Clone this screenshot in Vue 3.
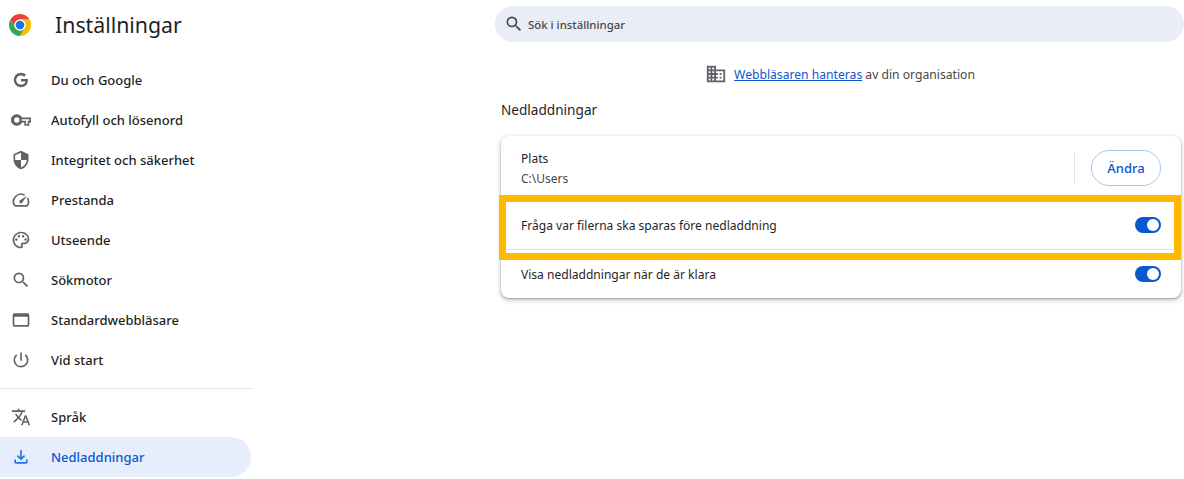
<script setup>
const G = 'M12 10.800v2.900h5.500c-.5 2.300-2.500 3.800-5.500 3.800-3.300 0-5.700-2.500-5.700-5.500S8.700 6.500 12 6.500c1.500 0 2.800.5 3.800 1.500l2.200-2.200C16.500 4.300 14.400 3.400 12 3.400c-4.800 0-8.600 3.800-8.600 8.600s3.800 8.600 8.600 8.600c5 0 8.300-3.500 8.300-8.400 0-.5 0-1-.1-1.400H12z'
const nav1 = [
  { label: 'Du och Google', paths: [G] },
  { label: 'Autofyll och lösenord', paths: ['M22 19h-6v-4h-2.680c-1.140 2.420-3.600 4-6.320 4-3.860 0-7-3.140-7-7s3.140-7 7-7c2.720 0 5.170 1.580 6.320 4H24v6h-2v4zM18 17h2v-4h2v-2H13v2h5zM7 8.800a3.200 3.200 0 1 0 0 6.400a3.200 3.200 0 1 0 0-6.400z'] },
  { label: 'Integritet och säkerhet', paths: ['M12 1L3 5v6c0 5.550 3.840 10.740 9 12 5.160-1.260 9-6.450 9-12V5l-9-4zm0 10.990h7c-.530 4.120-3.280 7.790-7 8.940V12H5V6.300l7-3.110v8.800z'] },
  { label: 'Prestanda', paths: ['M20.380 8.570l-1.230 1.850a8 8 0 0 1-.220 7.580H5.070A8 8 0 0 1 15.580 6.850l1.850-1.230A10 10 0 0 0 3.350 19a2 2 0 0 0 1.720 1h13.850a2 2 0 0 0 1.740-1 10 10 0 0 0-.270-10.440zM10.590 15.410a2 2 0 0 0 2.830 0l5.660-8.490-8.490 5.660a2 2 0 0 0 0 2.830z'] },
  { label: 'Utseende', paths: ['M12 22C6.490 22 2 17.510 2 12S6.490 2 12 2s10 4.040 10 9c0 3.310-2.690 6-6 6h-1.770c-.280 0-.5.220-.5.500 0 .120.050.230.130.330.410.470.640 1.060.640 1.670A2.500 2.500 0 0 1 12 22zm0-18c-4.410 0-8 3.590-8 8s3.590 8 8 8c.280 0 .5-.220.5-.5a.540.540 0 0 0-.140-.350c-.410-.460-.630-1.050-.630-1.650a2.500 2.500 0 0 1 2.500-2.500H16c2.210 0 4-1.790 4-4 0-3.860-3.590-7-8-7z', 'M5 11.500a1.500 1.500 0 1 0 3 0a1.500 1.500 0 1 0-3 0zM8 7.500a1.500 1.500 0 1 0 3 0a1.500 1.500 0 1 0-3 0zM13 7.500a1.500 1.500 0 1 0 3 0a1.500 1.500 0 1 0-3 0zM16 11.500a1.500 1.500 0 1 0 3 0a1.500 1.500 0 1 0-3 0z'] },
  { label: 'Sökmotor', paths: ['M15.500 14h-.790l-.280-.270A6.471 6.471 0 0 0 16 9.500 6.500 6.500 0 1 0 9.500 16c1.610 0 3.090-.590 4.230-1.570l.270.280v.790l5 4.990L20.490 19l-4.990-5zm-6 0C7.010 14 5 11.990 5 9.500S7.010 5 9.500 5 14 7.010 14 9.500 11.990 14 9.500 14z'] },
  { label: 'Standardwebbläsare', paths: ['M20 4H4c-1.110 0-2 .9-2 2v12c0 1.100.890 2 2 2h16c1.100 0 2-.9 2-2V6c0-1.100-.890-2-2-2zm0 14H4V8h16v10z'] },
  { label: 'Vid start', paths: ['M13 3h-2v10h2V3zm4.830 2.170l-1.420 1.420A6.920 6.920 0 0 1 19 12c0 3.870-3.130 7-7 7A6.995 6.995 0 0 1 7.580 6.580L6.170 5.170A8.932 8.932 0 0 0 3 12a9 9 0 0 0 18 0c0-2.740-1.230-5.180-3.170-6.830z'] },
]
const nav2 = [
  { label: 'Språk', paths: ['M12.870 15.070l-2.540-2.510.030-.030A17.520 17.520 0 0 0 14.070 6H17V4h-7V2H8v2H1v1.990h11.170C11.500 7.920 10.440 9.750 9 11.350 8.070 10.320 7.300 9.190 6.690 8h-2c.730 1.630 1.730 3.170 2.980 4.560l-5.090 5.020L4 19l5-5 3.110 3.110.760-2.040zM18.500 10h-2L12 22h2l1.120-3h4.750L21 22h2l-4.500-12zm-2.620 7l1.620-4.330L19.120 17h-3.240z'] },
  { label: 'Nedladdningar', active: true, paths: ['M12 16l-5-5 1.400-1.450 2.600 2.600V4h2v8.150l2.600-2.600L17 11l-5 5zM6 20c-.55 0-1.020-.2-1.410-.59A1.930 1.930 0 0 1 4 18v-3h2v3h12v-3h2v3c0 .55-.2 1.020-.59 1.410-.39.39-.86.59-1.410.59H6z'] },
]
</script>

<template>
  <div class="page">
    <aside class="sidebar">
      <header class="brand">
        <svg class="logo" viewBox="0 0 48 48" width="22" height="22">
          <path fill="#ea4335" d="M24 12h20.800A24 24 0 0 0 3.200 12l10.400 18A12 12 0 0 1 24 12z" />
          <path fill="#fbbc04" d="M44.800 12H24a12 12 0 0 1 10.400 18L24 48A24 24 0 0 0 44.800 12z" />
          <path fill="#34a853" d="M13.600 30 3.200 12A24 24 0 0 0 24 48l10.400-18a12 12 0 0 1-20.800 0z" />
          <circle cx="24" cy="24" r="12" fill="#fff" />
          <circle cx="24" cy="24" r="9.500" fill="#1a73e8" />
        </svg>
        <h1 class="title">Inställningar</h1>
      </header>
      <nav class="nav">
        <a v-for="item in nav1" :key="item.label" class="item">
          <svg class="icon" viewBox="0 0 24 24" width="20" height="20"><path v-for="d in item.paths" :key="d" :d="d" /></svg>
          <span>{{ item.label }}</span>
        </a>
        <hr class="rule" />
        <a v-for="item in nav2" :key="item.label" class="item" :class="{ active: item.active }">
          <svg class="icon" viewBox="0 0 24 24" width="20" height="20"><path v-for="d in item.paths" :key="d" :d="d" /></svg>
          <span>{{ item.label }}</span>
        </a>
      </nav>
    </aside>

    <main class="main">
      <div class="search">
        <svg viewBox="0 0 24 24" width="20" height="20" class="search-icon"><path d="M15.500 14h-.790l-.280-.270A6.471 6.471 0 0 0 16 9.500 6.500 6.500 0 1 0 9.500 16c1.610 0 3.090-.590 4.230-1.570l.270.280v.790l5 4.990L20.490 19l-4.990-5zm-6 0C7.010 14 5 11.990 5 9.500S7.010 5 9.500 5 14 7.010 14 9.500 11.990 14 9.500 14z" /></svg>
        <span>Sök i inställningar</span>
      </div>

      <div class="managed">
        <svg viewBox="0 0 24 24" width="22" height="22" class="managed-icon"><path d="M12 7V3H2v18h20V7H12zM6 19H4v-2h2v2zm0-4H4v-2h2v2zm0-4H4V9h2v2zm0-4H4V5h2v2zm4 12H8v-2h2v2zm0-4H8v-2h2v2zm0-4H8V9h2v2zm0-4H8V5h2v2zm10 12h-8v-2h2v-2h-2v-2h2v-2h-2V9h8v10zm-2-8h-2v2h2v-2zm0 4h-2v2h2v-2z" /></svg>
        <span><a class="link">Webbläsaren hanteras</a> av din organisation</span>
      </div>

      <h2 class="section">Nedladdningar</h2>

      <section class="card">
        <div class="row location">
          <div class="info">
            <div class="label">Plats</div>
            <div class="sub">C:\Users</div>
          </div>
          <div class="sep"></div>
          <button class="btn">Ändra</button>
        </div>
        <div class="row toggle-row bordered">
          <span class="label">Fråga var filerna ska sparas före nedladdning</span>
          <span class="toggle"></span>
        </div>
        <div class="row toggle-row last">
          <span class="label">Visa nedladdningar när de är klara</span>
          <span class="toggle"></span>
        </div>
        <div class="highlight"></div>
      </section>
    </main>
  </div>
</template>

<style>
html, body { margin: 0; background: #fff; overflow: hidden; }
</style>

<style scoped>
.page {
  display: flex;
  width: 1184px;
  height: 479px;
  overflow: hidden;
  font-family: "Noto Sans", "Open Sans", sans-serif;
  font-size: 13px;
  color: #1f1f1f;
  background: #fff;
}
.sidebar { width: 253px; flex: none; }
.brand { display: flex; align-items: center; height: 52px; padding: 0 0 0 9px; margin-bottom: 8px; }
.logo { margin-right: 24px; margin-top: -3px; }
.title { font-size: 21.300px; font-weight: 400; margin: -3px 0 0; line-height: 1; }
.nav { display: flex; flex-direction: column; }
.item {
  display: flex;
  align-items: center;
  gap: 20px;
  height: 40px;
  width: 251px;
  box-sizing: border-box;
  padding-left: 11px;
  font-weight: 500;
  border-radius: 0 20px 20px 0;
}
.icon { fill: #5f6368; flex: none; }
.item.active { background: #e6eefc; color: #0b57d0; }
.item.active .icon { fill: #1a73e8; }
.rule { width: 100%; height: 1px; border: 0; background: #e3e3e3; margin: 8px 0; }
.main { flex: 1; padding-left: 242px; min-width: 0; display: flex; flex-direction: column; }
.search {
  display: flex;
  align-items: center;
  gap: 4px;
  height: 36px;
  margin-top: 6px;
  padding-left: 9px;
  background: #e9eef6;
  border-radius: 18px;
  font-size: 11.400px;
  font-weight: 500;
  color: #474747;
}
.search-icon { fill: #474747; flex: none; }
.managed {
  display: flex;
  align-items: center;
  justify-content: center;
  gap: 7px;
  margin-top: 21px;
  height: 22px;
  padding-left: 1px;
  font-size: 12.150px;
  color: #474747;
}
.managed-icon { fill: #5f6368; }
.link { color: #0b57d0; text-decoration: underline; }
.section { font-size: 13.600px; font-weight: 400; margin: 15px 0 0 6px; line-height: 20px; }
.card {
  position: relative;
  margin: 16px 3px 0 6px;
  border-radius: 8px;
  background: #fff;
  font-size: 12.050px;
  box-shadow: 0 1px 2px rgba(60, 64, 67, .4), 0 2px 5px 1px rgba(60, 64, 67, .2);
}
.row { display: flex; align-items: center; padding: 0 20px; box-sizing: border-box; }
.location { height: 65px; padding-bottom: 2px; }
.info { flex: 1; margin-top: 2px; }
.sub { color: #474747; font-size: 12px; margin-top: 2px; }
.label { line-height: 18px; }
.toggle-row .label { margin-top: 2px; }
.sep { width: 1px; height: 32px; background: #e3e3e3; margin-right: 16px; }
.btn {
  width: 70px;
  height: 36px;
  border: 1px solid #a8c7fa;
  border-radius: 18px;
  background: #fff;
  color: #0b57d0;
  font: 500 13px "Noto Sans", "Open Sans", sans-serif;
  padding: 0;
}
.toggle-row { height: 49px; justify-content: space-between; }
.bordered { border-bottom: 1px solid #e3e3e3; }
.last { height: 48px; }
.toggle {
  position: relative;
  width: 26px;
  height: 16px;
  border-radius: 8px;
  background: #0b57d0;
}
.toggle::after {
  content: "";
  position: absolute;
  top: 2px;
  right: 2px;
  width: 12px;
  height: 12px;
  border-radius: 50%;
  background: #fff;
}
.highlight {
  position: absolute;
  left: -2px;
  right: 0;
  top: 59px;
  height: 65px;
  box-sizing: border-box;
  border: 7px solid #ffb900;
  pointer-events: none;
}
</style>
